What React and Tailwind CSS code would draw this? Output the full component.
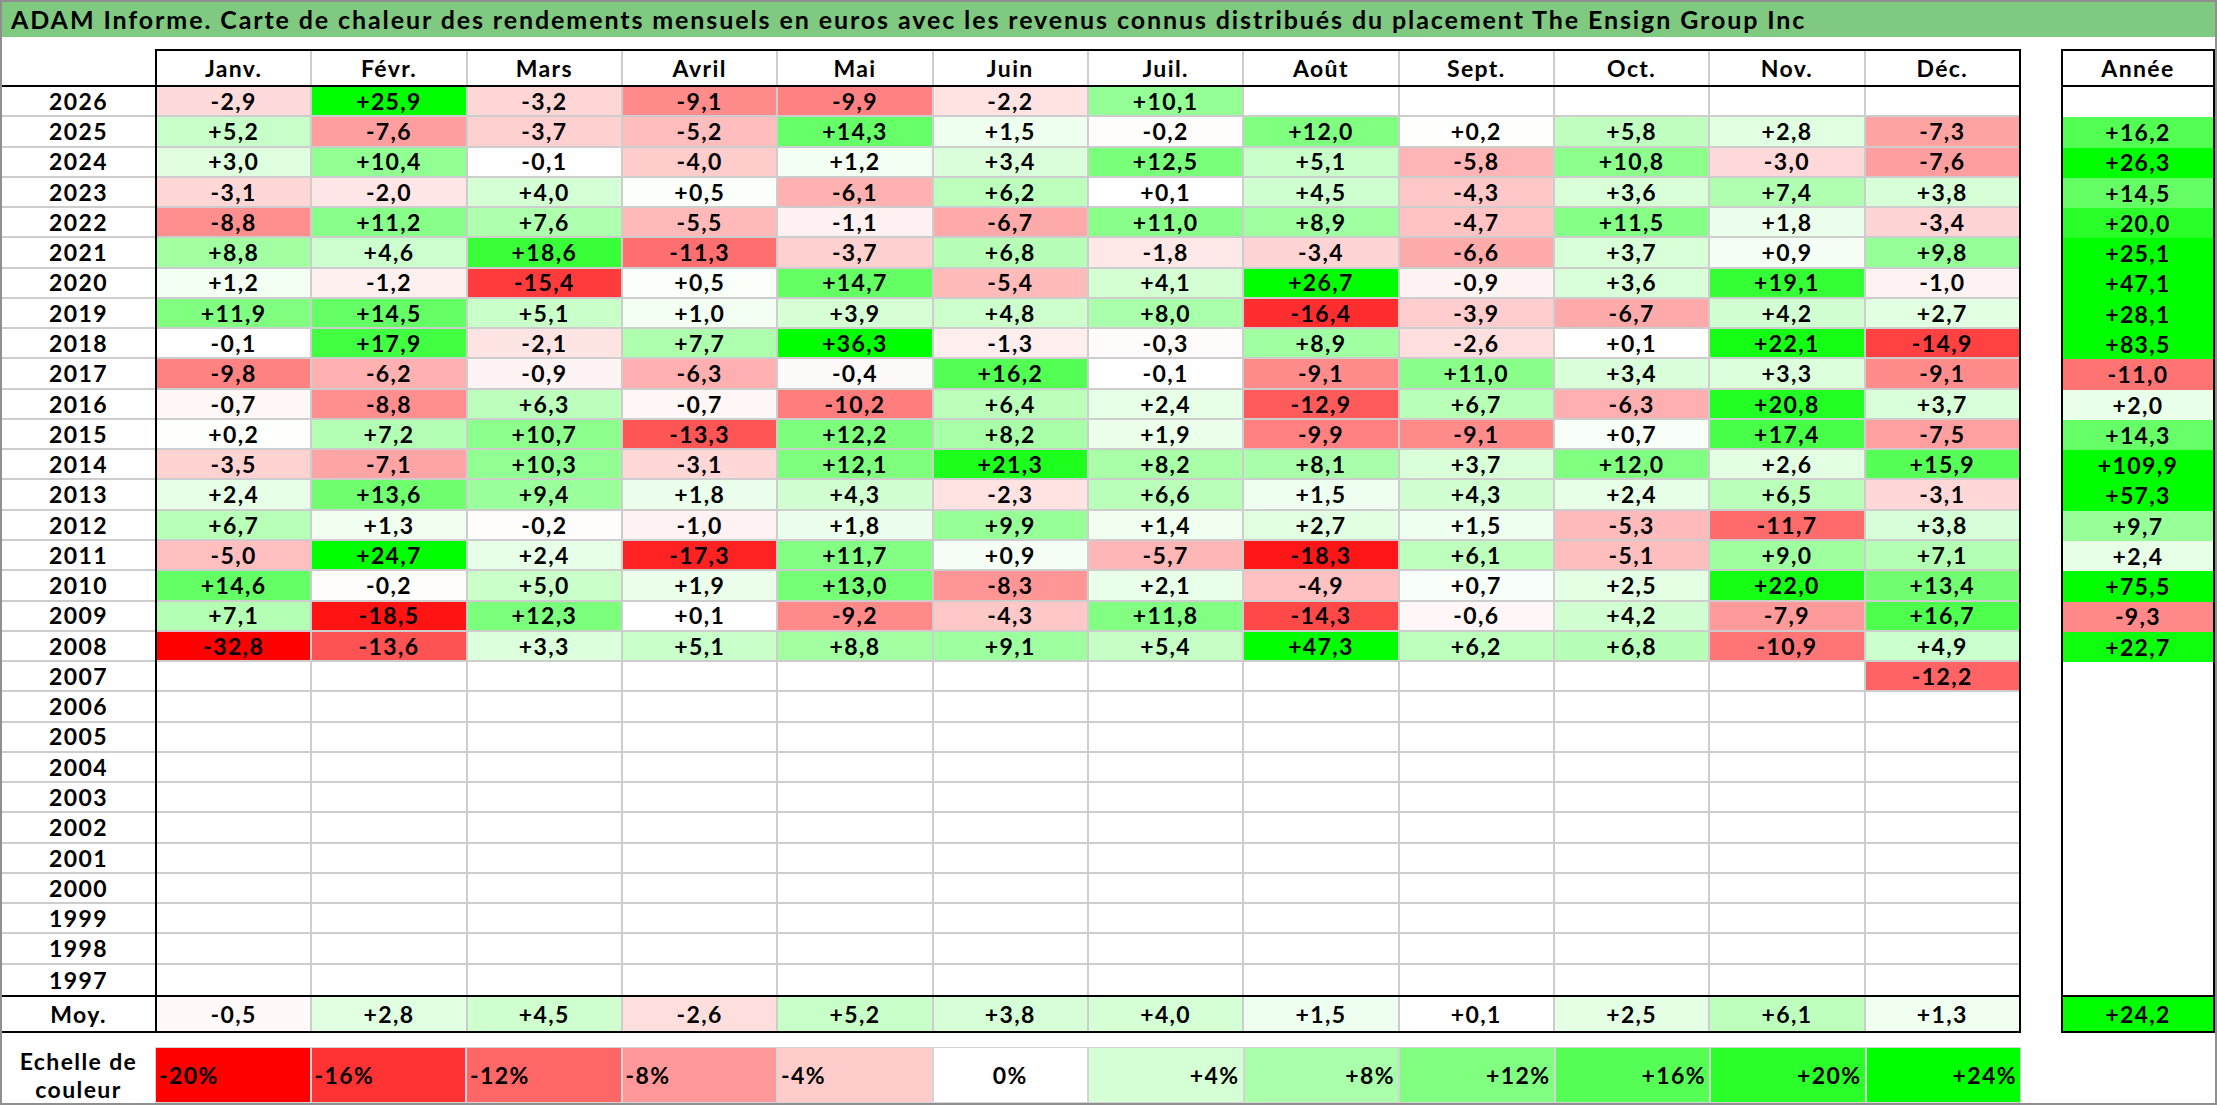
import clsx from 'clsx';

const MONTHS = ['Janv.', 'Févr.', 'Mars', 'Avril', 'Mai', 'Juin', 'Juil.', 'Août', 'Sept.', 'Oct.', 'Nov.', 'Déc.'];

// year, 12 months, year total ('.' = no data)
const DATA = [
  [2026, '-2,9 +25,9 -3,2 -9,1 -9,9 -2,2 +10,1 . . . . . .'],
  [2025, '+5,2 -7,6 -3,7 -5,2 +14,3 +1,5 -0,2 +12,0 +0,2 +5,8 +2,8 -7,3 +16,2'],
  [2024, '+3,0 +10,4 -0,1 -4,0 +1,2 +3,4 +12,5 +5,1 -5,8 +10,8 -3,0 -7,6 +26,3'],
  [2023, '-3,1 -2,0 +4,0 +0,5 -6,1 +6,2 +0,1 +4,5 -4,3 +3,6 +7,4 +3,8 +14,5'],
  [2022, '-8,8 +11,2 +7,6 -5,5 -1,1 -6,7 +11,0 +8,9 -4,7 +11,5 +1,8 -3,4 +20,0'],
  [2021, '+8,8 +4,6 +18,6 -11,3 -3,7 +6,8 -1,8 -3,4 -6,6 +3,7 +0,9 +9,8 +25,1'],
  [2020, '+1,2 -1,2 -15,4 +0,5 +14,7 -5,4 +4,1 +26,7 -0,9 +3,6 +19,1 -1,0 +47,1'],
  [2019, '+11,9 +14,5 +5,1 +1,0 +3,9 +4,8 +8,0 -16,4 -3,9 -6,7 +4,2 +2,7 +28,1'],
  [2018, '-0,1 +17,9 -2,1 +7,7 +36,3 -1,3 -0,3 +8,9 -2,6 +0,1 +22,1 -14,9 +83,5'],
  [2017, '-9,8 -6,2 -0,9 -6,3 -0,4 +16,2 -0,1 -9,1 +11,0 +3,4 +3,3 -9,1 -11,0'],
  [2016, '-0,7 -8,8 +6,3 -0,7 -10,2 +6,4 +2,4 -12,9 +6,7 -6,3 +20,8 +3,7 +2,0'],
  [2015, '+0,2 +7,2 +10,7 -13,3 +12,2 +8,2 +1,9 -9,9 -9,1 +0,7 +17,4 -7,5 +14,3'],
  [2014, '-3,5 -7,1 +10,3 -3,1 +12,1 +21,3 +8,2 +8,1 +3,7 +12,0 +2,6 +15,9 +109,9'],
  [2013, '+2,4 +13,6 +9,4 +1,8 +4,3 -2,3 +6,6 +1,5 +4,3 +2,4 +6,5 -3,1 +57,3'],
  [2012, '+6,7 +1,3 -0,2 -1,0 +1,8 +9,9 +1,4 +2,7 +1,5 -5,3 -11,7 +3,8 +9,7'],
  [2011, '-5,0 +24,7 +2,4 -17,3 +11,7 +0,9 -5,7 -18,3 +6,1 -5,1 +9,0 +7,1 +2,4'],
  [2010, '+14,6 -0,2 +5,0 +1,9 +13,0 -8,3 +2,1 -4,9 +0,7 +2,5 +22,0 +13,4 +75,5'],
  [2009, '+7,1 -18,5 +12,3 +0,1 -9,2 -4,3 +11,8 -14,3 -0,6 +4,2 -7,9 +16,7 -9,3'],
  [2008, '-32,8 -13,6 +3,3 +5,1 +8,8 +9,1 +5,4 +47,3 +6,2 +6,8 -10,9 +4,9 +22,7'],
  [2007, '. . . . . . . . . . . -12,2 .'],
];
for (let y = 2006; y >= 1997; y--) DATA.push([y, '. . . . . . . . . . . . .']);

const AVG = '-0,5 +2,8 +4,5 -2,6 +5,2 +3,8 +4,0 +1,5 +0,1 +2,5 +6,1 +1,3 +24,2';

const SCALE = [-20, -16, -12, -8, -4, 0, 4, 8, 12, 16, 20, 24];

const cells = (s) => s.split(' ').map((v) => (v === '.' ? null : v));

// red down to -20 %, green up to +24 %
function heat(v) {
  if (v < 0) {
    const c = Math.round(255 * (1 - Math.min(1, -v / 20)));
    return `rgb(255,${c},${c})`;
  }
  const c = Math.round(255 * (1 - Math.min(1, v / 24)));
  return `rgb(${c},255,${c})`;
}

const num = (s) => parseFloat(s.replace(',', '.'));

function Row({ label, values, last, avg }) {
  const months = values.slice(0, 12);
  const total = values[12];
  return (
    <div className={clsx('flex', avg ? 'h-[38px]' : 'h-[30.27px]')}>
      <div
        className={clsx(
          'w-[153px] flex items-center justify-center',
          avg ? 'border-y-2 border-black' : !last && 'border-b-2 border-[#cdcdcd]'
        )}
      >
        {label}
      </div>
      <div className={clsx('w-[1866px] flex border-x-2 border-black', avg && 'border-y-2')}>
        {months.map((v, i) => (
          <div
            key={i}
            className={clsx(
              'flex-1 flex items-center justify-center border-[#cdcdcd]',
              i < 11 && 'border-r-2',
              !avg && !last && 'border-b-2'
            )}
            style={v ? { backgroundColor: heat(num(v)) } : undefined}
          >
            {v}
          </div>
        ))}
      </div>
      <div className="w-[40px]" />
      <div
        className={clsx('w-[154px] flex items-center justify-center border-x-2 border-black', avg && 'border-y-2')}
        style={total ? { backgroundColor: heat(num(total)) } : undefined}
      >
        {total}
      </div>
    </div>
  );
}

export default function App() {
  return (
    <div className="w-[2217px] h-[1105px] bg-white border-2 border-[#8f8f8f] flex flex-col text-black font-bold font-['Lato','Liberation_Sans',sans-serif] text-[23px] tracking-[0.06em]">
      <div className="h-[35px] bg-[#80c980] flex items-center pl-[9px] text-[25px] tracking-[0.076em] whitespace-nowrap">
        ADAM Informe. Carte de chaleur des rendements mensuels en euros avec les revenus connus distribués du placement The Ensign Group Inc
      </div>

      <div className="h-[12px]" />

      <div className="flex h-[38px]">
        <div className="w-[153px] border-b-2 border-black" />
        <div className="w-[1866px] flex border-2 border-black">
          {MONTHS.map((m, i) => (
            <div
              key={m}
              className={clsx('flex-1 flex items-center justify-center', i < 11 && 'border-r-2 border-[#cdcdcd]')}
            >
              {m}
            </div>
          ))}
        </div>
        <div className="w-[40px]" />
        <div className="w-[154px] flex items-center justify-center border-2 border-black">Année</div>
      </div>

      {DATA.map(([year, s], i) => (
        <Row key={year} label={year} values={cells(s)} last={i === DATA.length - 1} />
      ))}

      <Row label="Moy." values={cells(AVG)} avg />

      <div className="h-[14px]" />

      <div className="flex h-[56px]">
        <div className="w-[153px] flex items-center justify-center text-center leading-[28px]">
          Echelle de
          <br />
          couleur
        </div>
        <div className="w-[1866px] flex">
          {SCALE.map((p) => (
            <div
              key={p}
              className={clsx(
                'flex-1 flex items-center border border-[#d4d4d4] px-[3px]',
                p < 0 && 'justify-start',
                p === 0 && 'justify-center',
                p > 0 && 'justify-end'
              )}
              style={{ backgroundColor: heat(p) }}
            >
              {p > 0 ? `+${p}%` : `${p}%`}
            </div>
          ))}
        </div>
      </div>
    </div>
  );
}
